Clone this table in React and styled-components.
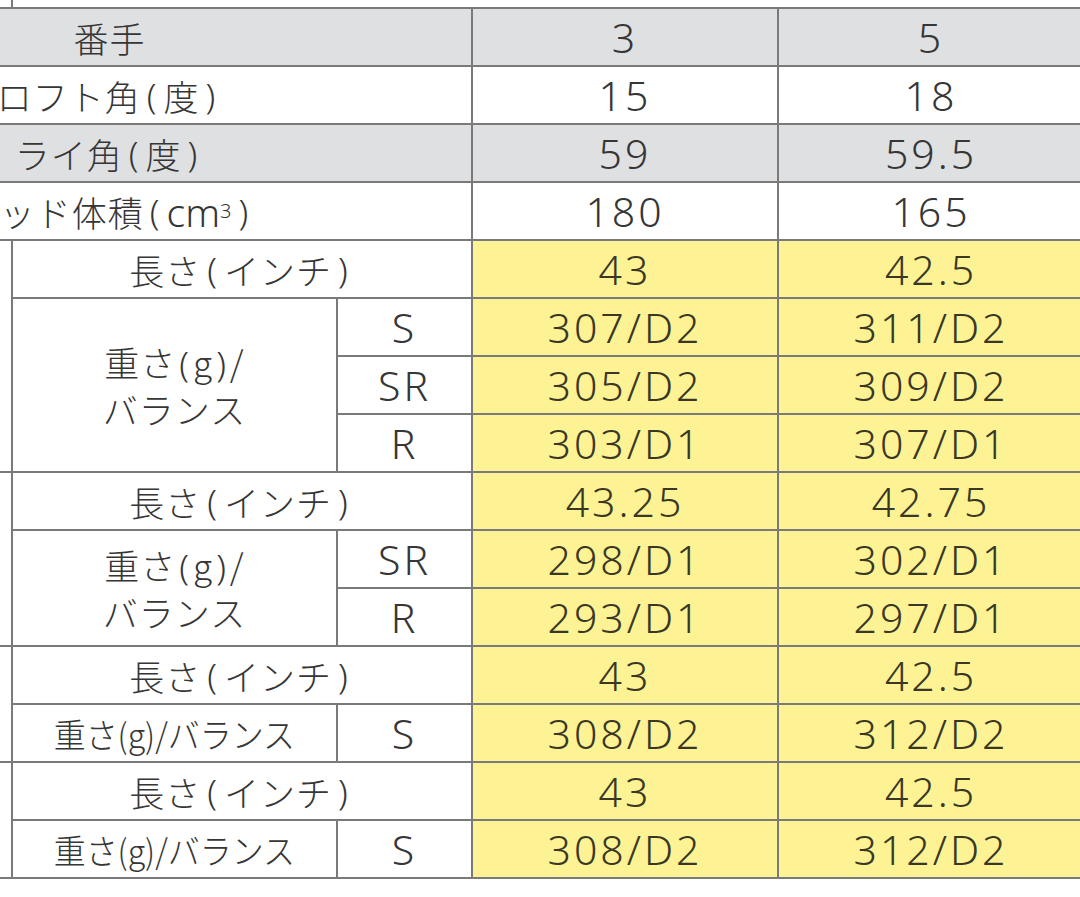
import React from 'react';
import styled, { createGlobalStyle } from 'styled-components';

const GlobalStyle = createGlobalStyle`
  html, body {
    margin: 0;
    padding: 0;
    background: #ffffff;
    overflow: hidden;
  }
`

const tones = {
  white: '#ffffff',
  gray: '#dfe0e2',
  yellow: '#fdf394',
}

const Page = styled.div`
  width: 1080px;
  height: 897px;
  overflow: hidden;
  background: #ffffff;
`

// the spec table is wider than the shot; its left part is cut off
const SpecGrid = styled.div`
  display: grid;
  grid-template-columns: 263px 323px 133px 304px 304px;
  grid-template-rows: 7px repeat(15, 56px);
  gap: 2px;
  padding: 0 2px 2px 0;
  margin-left: -252px;
  width: max-content;
  background: #7a7a7a;
`

const Cell = styled.div`
  grid-column: ${p => p.$col};
  grid-row: ${p => p.$row};
  background: ${p => tones[p.$tone || 'white']};
  display: flex;
  align-items: center;
  justify-content: center;
  text-align: center;
  color: #363636;
  white-space: nowrap;
`

const Label = styled(Cell)`
  font-family: "Noto Sans CJK JP", "Noto Sans", sans-serif;
  font-weight: 300;
  font-size: 35px;
  line-height: 45px;
  letter-spacing: 1px;
`

const Value = styled(Cell)`
  font-family: "Noto Sans", "Liberation Sans", sans-serif;
  font-weight: 300;
  font-size: 41px;
  letter-spacing: 3px;
  color: ${p => (p.$tone === 'yellow' ? '#3a3725' : '#363636')};
`

const Sup = styled.sup`
  font-family: "Noto Sans", sans-serif;
  font-size: 20px;
  vertical-align: 12px;
  line-height: 0;
`

const Latin = styled.span`
  font-family: "Noto Sans", sans-serif;
  font-weight: 300;
  font-size: 39px;
  letter-spacing: 0;
`

const Paren = styled.span`
  font-family: "Noto Sans", sans-serif;
  font-weight: 300;
  margin: 0 ${p => p.$gap ?? 6}px;
`

const Stack = styled.span`
  display: inline-block;
  line-height: 45px;
`

const Squeeze = styled.span`
  display: inline-block;
  transform: scaleX(0.94);
  letter-spacing: 0;
  font-size: 34px;
`

const Weight = () => (
  <>重さ<Paren $gap={3}>(</Paren>g<Paren $gap={3}>)</Paren>/</>
)

const headRows = [
  { label: '番手', a: '3', b: '5', tone: 'gray' },
  { label: <>ロフト角<Paren>(</Paren>度<Paren>)</Paren></>, a: '15', b: '18', tone: 'white' },
  { label: <>ライ角<Paren>(</Paren>度<Paren>)</Paren></>, a: '59', b: '59.5', tone: 'gray' },
  {
    label: <>ヘッド体積<Paren>(</Paren><Latin>cm</Latin><Sup>3</Sup><Paren>)</Paren></>,
    a: '180',
    b: '165',
    tone: 'white',
  },
]

const shafts = [
  { start: 5, length: ['43', '42.5'], weights: [['S', '307/D2', '311/D2'], ['SR', '305/D2', '309/D2'], ['R', '303/D1', '307/D1']] },
  { start: 9, length: ['43.25', '42.75'], weights: [['SR', '298/D1', '302/D1'], ['R', '293/D1', '297/D1']] },
  { start: 12, length: ['43', '42.5'], weights: [['S', '308/D2', '312/D2']] },
  { start: 14, length: ['43', '42.5'], weights: [['S', '308/D2', '312/D2']] },
]

const ShaftBlock = ({ start, length, weights }) => {
  const n = weights.length
  const first = start + 1
  return (
    <>
      <Cell $col="1" $row={`${start} / span ${n + 1}`} />
      <Label $col="2 / span 2" $row={`${start}`}>長さ<Paren>(</Paren>インチ<Paren>)</Paren></Label>
      <Value $col="4" $row={`${start}`} $tone="yellow">{length[0]}</Value>
      <Value $col="5" $row={`${start}`} $tone="yellow">{length[1]}</Value>
      <Label $col="2" $row={`${first} / span ${n}`}>
        {n > 1
          ? <Stack><Weight /><br />バランス</Stack>
          : <Squeeze>重さ(g)/バランス</Squeeze>}
      </Label>
      {weights.map(([flex, a, b], i) => (
        <React.Fragment key={flex}>
          <Value $col="3" $row={`${first + i}`}>{flex}</Value>
          <Value $col="4" $row={`${first + i}`} $tone="yellow">{a}</Value>
          <Value $col="5" $row={`${first + i}`} $tone="yellow">{b}</Value>
        </React.Fragment>
      ))}
    </>
  )
}

export default function App() {
  return (
    <Page>
      <GlobalStyle />
      <SpecGrid>
        <Cell $col="1" $row="1" />
        <Cell $col="2 / span 4" $row="1" />
        {headRows.map((r, i) => (
          <React.Fragment key={i}>
            <Label $col="1 / span 3" $row={`${i + 2}`} $tone={r.tone}>{r.label}</Label>
            <Value $col="4" $row={`${i + 2}`} $tone={r.tone}>{r.a}</Value>
            <Value $col="5" $row={`${i + 2}`} $tone={r.tone}>{r.b}</Value>
          </React.Fragment>
        ))}
        {shafts.map(s => (
          <ShaftBlock key={s.start} {...s} start={s.start + 1} />
        ))}
      </SpecGrid>
    </Page>
  )
}
